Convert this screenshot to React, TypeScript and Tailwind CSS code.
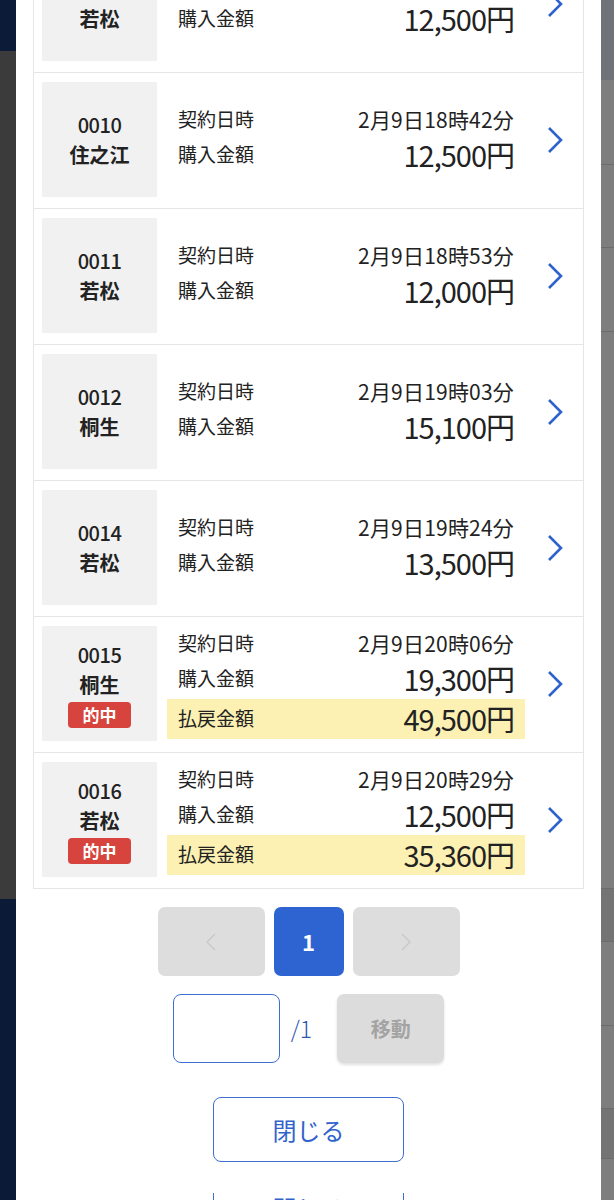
import React from 'react';

type Contract = {
  no: string;
  place: string;
  date: string;
  amount: string;
  payout?: string;
};

const contracts: Contract[] = [
  { no: '0009', place: '若松', date: '2月9日18時31分', amount: '12,500円' },
  { no: '0010', place: '住之江', date: '2月9日18時42分', amount: '12,500円' },
  { no: '0011', place: '若松', date: '2月9日18時53分', amount: '12,000円' },
  { no: '0012', place: '桐生', date: '2月9日19時03分', amount: '15,100円' },
  { no: '0014', place: '若松', date: '2月9日19時24分', amount: '13,500円' },
  { no: '0015', place: '桐生', date: '2月9日20時06分', amount: '19,300円', payout: '49,500円' },
  { no: '0016', place: '若松', date: '2月9日20時29分', amount: '12,500円', payout: '35,360円' },
];

const jp = "font-['Noto_Sans_CJK_JP',sans-serif]";

function Chevron() {
  return (
    <svg width="16" height="28" viewBox="0 0 16 28">
      <polyline points="2,2 14,14 2,26" fill="none" stroke="currentColor" strokeWidth="2.6" />
    </svg>
  );
}

function Row({ c }: { c: Contract }) {
  return (
    <div className="flex border-b border-[#e6e6e6] pl-[8px] pt-[9px] pb-[11px] last:border-b-0">
      <div className="flex h-[115px] w-[115px] shrink-0 flex-col items-center justify-center bg-[#f1f1f1] text-[#222]">
        <div className={`${jp} text-[20px] leading-[30px] font-medium tracking-[-0.5px]`}>{c.no}</div>
        <div className={`${jp} text-[20px] leading-[30px] font-bold`}>{c.place}</div>
        {c.payout && (
          <div className={`${jp} mt-[2px] flex h-[26px] w-[63px] items-center justify-center rounded-[4px] bg-[#d6443d] text-[17px] font-bold text-white`}>
            的中
          </div>
        )}
      </div>
      <div className="ml-[10px] flex w-[358px] flex-col justify-center text-[#222]">
        <div className="flex h-[30px] items-center justify-between px-[11px]">
          <span className={`${jp} text-[19px]`}>契約日時</span>
          <span className={`${jp} text-[21px] tracking-[0.2px]`}>{c.date}</span>
        </div>
        <div className="flex h-[40px] items-center justify-between px-[11px]">
          <span className={`${jp} text-[19px]`}>購入金額</span>
          <span className={`${jp} text-[29px] tracking-[-1px]`}>{c.amount}</span>
        </div>
        {c.payout && (
          <div className="flex h-[40px] items-center justify-between bg-[#fcf0b2] px-[11px]">
            <span className={`${jp} text-[19px]`}>払戻金額</span>
            <span className={`${jp} text-[29px] tracking-[-1px]`}>{c.payout}</span>
          </div>
        )}
      </div>
      <div className="flex flex-1 items-center justify-center pl-[2px] text-[#2d62cf]">
        <Chevron />
      </div>
    </div>
  );
}

export default function App() {
  return (
    <div className="flex h-[1200px] w-[614px] overflow-hidden bg-white">
      {/* dimmed page behind, left edge */}
      <div className="flex w-[16px] shrink-0 flex-col">
        <div className="h-[51px] shrink-0 bg-[#0c1b37]" />
        <div className="h-[848px] shrink-0 bg-[#3b3b3b]" />
        <div className="flex-1 bg-[#0b1b37]" />
      </div>

      <div className="flex w-[585px] shrink-0 flex-col items-center bg-white">
        <div className="-mt-[64px] w-[551px] shrink-0 border border-[#e6e6e6]">
          {contracts.map((c) => (
            <Row key={c.no} c={c} />
          ))}
        </div>

        <div className="mt-[18px] flex shrink-0 gap-[9px]">
          <button className="flex h-[69px] w-[107px] items-center justify-center rounded-[7px] bg-[#dddddd] text-[#c9c9c9]">
            <svg width="12" height="20" viewBox="0 0 12 20">
              <polyline points="10,2 2,10 10,18" fill="none" stroke="currentColor" strokeWidth="1.5" />
            </svg>
          </button>
          <button className={`${jp} flex h-[69px] w-[70px] items-center justify-center rounded-[7px] bg-[#2e64d2] text-[22px] font-bold text-white`}>
            1
          </button>
          <button className="flex h-[69px] w-[107px] items-center justify-center rounded-[7px] bg-[#dddddd] text-[#c9c9c9]">
            <svg width="12" height="20" viewBox="0 0 12 20">
              <polyline points="2,2 10,10 2,18" fill="none" stroke="currentColor" strokeWidth="1.5" />
            </svg>
          </button>
        </div>

        <div className="mt-[18px] flex shrink-0 items-center">
          <div className="h-[69px] w-[107px] rounded-[8px] border border-[#3d6fd3]" />
          <span className={`${jp} ml-[11px] mr-[25px] text-[23px] font-light text-[#2f58b0]`}>/1</span>
          <button className={`${jp} flex h-[69px] w-[107px] items-center justify-center rounded-[7px] bg-[#dcdcdc] text-[20px] font-bold text-[#a3a3a3] shadow-[0_2px_3px_rgba(0,0,0,0.12)]`}>
            移動
          </button>
        </div>

        <button className={`${jp} mt-[34px] flex h-[65px] w-[191px] shrink-0 items-center justify-center rounded-[8px] border border-[#3d6fd3] text-[24px] text-[#3063cc]`}>
          閉じる
        </button>

        <div className={`${jp} mt-[31px] flex h-[65px] w-[191px] shrink-0 justify-center border-x border-[#3d6fd3] text-[24px] leading-none text-[#3063cc]`}>
          <span className="mt-[3px]">閉じる</span>
        </div>
      </div>

      {/* dimmed page behind, right edge */}
      <div className="flex flex-1 flex-col bg-[#7e7e7e]">
        <div className="h-[80px] shrink-0 bg-[#6f7276]" />
        <div className="h-[85px] shrink-0 border-b border-[#6c6c6c]" />
        <div className="h-[83px] shrink-0 border-b border-[#6c6c6c]" />
        <div className="h-[84px] shrink-0 border-b border-[#6c6c6c]" />
        <div className="h-[557px] shrink-0 border-b border-[#6c6c6c]" />
        <div className="h-[53px] shrink-0 border-b border-[#6c6c6c] bg-[#747474]" />
        <div className="h-[84px] shrink-0 border-b border-[#6c6c6c]" />
        <div className="h-[83px] shrink-0 border-b border-[#6c6c6c]" />
        <div className="h-[50px] shrink-0 border-b border-[#6c6c6c] bg-[#747474]" />
      </div>
    </div>
  );
}
